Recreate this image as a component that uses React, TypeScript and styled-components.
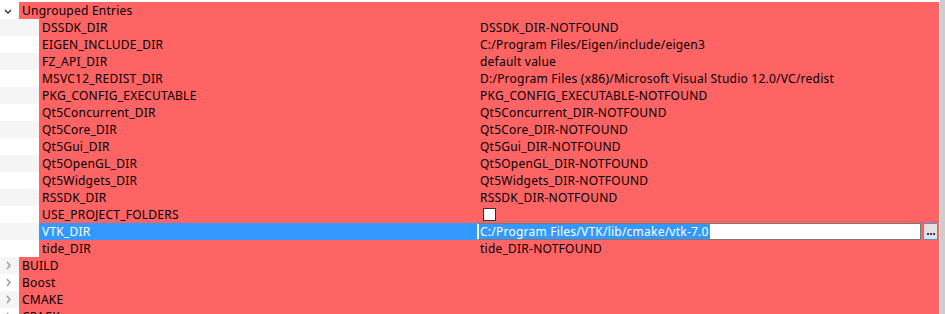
import React from "react";
import styled, { createGlobalStyle } from "styled-components";

const Global = createGlobalStyle`
  html, body { margin: 0; padding: 0; background: #ffffff; }
  body { font-family: "Noto Sans", "Liberation Sans", sans-serif; font-size: 12px; letter-spacing: 0.23px; color: #000; }
`;

const Frame = styled.div`
  width: 945px;
  height: 314px;
  overflow: hidden;
  display: flex;
  background: #ffffff;
`;

const Tree = styled.div`
  width: 939px;
  padding-top: 2px;
  display: flex;
  flex-direction: column;
`;

const ScrollGap = styled.div`
  width: 1px;
  background: #ffffff;
`;

const Scrollbar = styled.div`
  width: 5px;
  background: #cdcdcd;
`;

const Row = styled.div`
  height: 17px;
  display: flex;
  flex-shrink: 0;
`;

const Branch = styled.div<{ $width: number; $alt: boolean }>`
  width: ${(p) => p.$width}px;
  flex-shrink: 0;
  background: ${(p) => (p.$alt ? "#f5f5f5" : "#ffffff")};
  display: flex;
  align-items: center;
`;

const GroupCell = styled.div`
  flex: 1;
  background: #ff6464;
  padding-left: 3px;
  line-height: 17px;
  white-space: nowrap;
`;

const NameCell = styled.div<{ $selected: boolean }>`
  width: 438px;
  flex-shrink: 0;
  background: ${(p) => (p.$selected ? "#3399ff" : "#ff6464")};
  color: ${(p) => (p.$selected ? "#ffffff" : "#000000")};
  padding-left: 3px;
  box-sizing: border-box;
  line-height: 17px;
  white-space: nowrap;
`;

const ValueCell = styled.div`
  flex: 1;
  background: #ff6464;
  padding-left: 3px;
  line-height: 17px;
  white-space: nowrap;
  display: flex;
  align-items: center;
`;

const EditCell = styled.div`
  flex: 1;
  background: #ff6464;
  display: flex;
  align-items: stretch;
  gap: 2px;
  padding-right: 1px;
`;

const EditBox = styled.div`
  flex: 1;
  background: #ffffff;
  border: 1px solid #7a7a7a;
  border-left-color: #ffffff;
  line-height: 15px;
  padding-left: 1px;
  white-space: nowrap;
  overflow: hidden;
`;

const Selection = styled.span`
  background: #3399ff;
  color: #ffffff;
  padding: 0 1px;
`;

const BrowseButton = styled.div`
  width: 15px;
  background: #e1e1e1;
  border: 1px solid #3c9be8;
  display: flex;
  align-items: flex-end;
  justify-content: center;
  padding-bottom: 4px;
  box-sizing: border-box;
`;

const Dot = styled.span<{ $c: string }>`
  width: 2px;
  height: 2px;
  background: ${(p) => p.$c};
  margin: 0 0.5px;
`;

const CheckBox = styled.div`
  width: 11px;
  height: 11px;
  border: 1px solid #333333;
  background: #ffffff;
  margin-left: 3px;
`;

const Chevron = ({ open }: { open: boolean }) =>
  open ? (
    <svg width="19" height="17" viewBox="0 0 19 17">
      <polyline points="5,8 8,11 11,8" fill="none" stroke="#333" strokeWidth="1.4" />
    </svg>
  ) : (
    <svg width="19" height="17" viewBox="0 0 19 17">
      <polyline points="7,5 10,8.5 7,12" fill="none" stroke="#9a9a9a" strokeWidth="1.4" />
    </svg>
  );

type Entry = { name: string; value: string; kind?: "bool" | "edit" };

const entries: Entry[] = [
  { name: "DSSDK_DIR", value: "DSSDK_DIR-NOTFOUND" },
  { name: "EIGEN_INCLUDE_DIR", value: "C:/Program Files/Eigen/include/eigen3" },
  { name: "FZ_API_DIR", value: "default value" },
  { name: "MSVC12_REDIST_DIR", value: "D:/Program Files (x86)/Microsoft Visual Studio 12.0/VC/redist" },
  { name: "PKG_CONFIG_EXECUTABLE", value: "PKG_CONFIG_EXECUTABLE-NOTFOUND" },
  { name: "Qt5Concurrent_DIR", value: "Qt5Concurrent_DIR-NOTFOUND" },
  { name: "Qt5Core_DIR", value: "Qt5Core_DIR-NOTFOUND" },
  { name: "Qt5Gui_DIR", value: "Qt5Gui_DIR-NOTFOUND" },
  { name: "Qt5OpenGL_DIR", value: "Qt5OpenGL_DIR-NOTFOUND" },
  { name: "Qt5Widgets_DIR", value: "Qt5Widgets_DIR-NOTFOUND" },
  { name: "RSSDK_DIR", value: "RSSDK_DIR-NOTFOUND" },
  { name: "USE_PROJECT_FOLDERS", value: "", kind: "bool" },
  { name: "VTK_DIR", value: "C:/Program Files/VTK/lib/cmake/vtk-7.0", kind: "edit" },
  { name: "tide_DIR", value: "tide_DIR-NOTFOUND" },
];

const groups = ["BUILD", "Boost", "CMAKE", "CPACK"];

export default function App() {
  let idx = 0;
  return (
    <>
      <Global />
      <Frame>
        <Tree>
          <Row>
            <Branch $width={19} $alt={false}>
              <Chevron open />
            </Branch>
            <GroupCell>Ungrouped Entries</GroupCell>
          </Row>
          {entries.map((e) => {
            idx++;
            const alt = idx % 2 === 1;
            return (
              <Row key={e.name}>
                <Branch $width={39} $alt={alt} />
                <NameCell $selected={e.kind === "edit"}>{e.name}</NameCell>
                {e.kind === "edit" ? (
                  <EditCell>
                    <EditBox>
                      <Selection>{e.value}</Selection>
                    </EditBox>
                    <BrowseButton>
                      <Dot $c="#1a3a8a" />
                      <Dot $c="#8a1a3a" />
                      <Dot $c="#1a3a8a" />
                    </BrowseButton>
                  </EditCell>
                ) : (
                  <ValueCell>{e.kind === "bool" ? <CheckBox /> : e.value}</ValueCell>
                )}
              </Row>
            );
          })}
          {groups.map((g) => {
            idx++;
            const alt = idx % 2 === 1;
            return (
              <Row key={g}>
                <Branch $width={19} $alt={alt}>
                  <Chevron open={false} />
                </Branch>
                <GroupCell>{g}</GroupCell>
              </Row>
            );
          })}
        </Tree>
        <ScrollGap />
        <Scrollbar />
      </Frame>
    </>
  );
}
